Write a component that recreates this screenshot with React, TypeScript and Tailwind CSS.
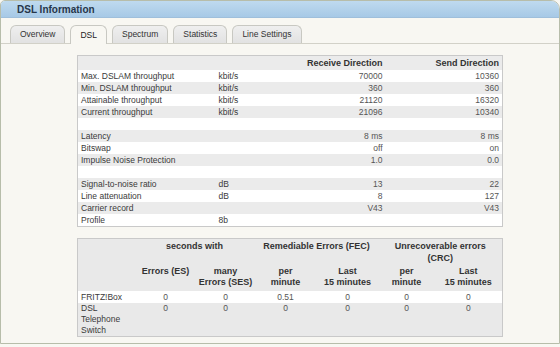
import React from "react";

const rows1: [string, string, string, string][] = [
  ["Max. DSLAM throughput", "kbit/s", "70000", "10360"],
  ["Min. DSLAM throughput", "kbit/s", "360", "360"],
  ["Attainable throughput", "kbit/s", "21120", "16320"],
  ["Current throughput", "kbit/s", "21096", "10340"],
  ["", "", "", ""],
  ["Latency", "", "8 ms", "8 ms"],
  ["Bitswap", "", "off", "on"],
  ["Impulse Noise Protection", "", "1.0", "0.0"],
  ["", "", "", ""],
  ["Signal-to-noise ratio", "dB", "13", "22"],
  ["Line attenuation", "dB", "8", "127"],
  ["Carrier record", "", "V43", "V43"],
  ["Profile", "8b", "", ""],
];

const tabs = ["Overview", "DSL", "Spectrum", "Statistics", "Line Settings"];

export default function App() {
  return (
    <div className="w-[560px] h-[347px] overflow-hidden bg-[#f8f7f2] font-['Liberation_Sans',Arial,sans-serif] text-[#3a3a3a]">
      <div className="h-[344px] border border-[#b7bdaa] rounded-tl-[5px] rounded-tr-[9px] overflow-hidden flex flex-col bg-[#f8f7f2]">
        <div className="h-[17px] shrink-0 bg-gradient-to-b from-[#bfdaef] to-[#a7c9e6] border-b border-[#9fbfdb] pl-[16px] text-[10px] font-bold leading-[17px] text-[#27364a]">
          DSL Information
        </div>
        <div className="mt-[7px] h-[19px] shrink-0 flex items-end gap-[5px] pl-[9px] border-b border-[#d2d1c8]">
          {tabs.map((t) =>
            t === "DSL" ? (
              <div
                key={t}
                className="h-[19px] mb-[-1px] px-[9px] rounded-t-[6px] border border-b-0 border-[#c8c8c2] bg-[#f8f7f2] text-[8.5px] leading-[18px] text-[#222]"
              >
                {t}
              </div>
            ) : (
              <div
                key={t}
                className="h-[18px] px-[9px] rounded-t-[6px] border border-b-0 border-[#c8c8c2] bg-gradient-to-b from-[#efefef] to-[#e2e2e2] text-[8.5px] leading-[17px] text-[#333]"
              >
                {t}
              </div>
            )
          )}
        </div>
        <div className="pl-[76px] pt-[11px] flex flex-col gap-[11px]">
          <table className="w-[425px] table-fixed border-collapse border border-[#c9c9c9] bg-white">
            <colgroup>
              <col className="w-[141px]" />
              <col className="w-[83px]" />
              <col className="w-[84px]" />
              <col className="w-[117px]" />
            </colgroup>
            <thead>
              <tr className="h-[14px] bg-[#ebebeb] text-[9px] font-bold text-[#333]">
                <th></th>
                <th></th>
                <th className="text-right pr-[3px] font-bold leading-[14px]">Receive Direction</th>
                <th className="text-right pr-[3px] font-bold leading-[14px]">Send Direction</th>
              </tr>
            </thead>
            <tbody>
              {rows1.map((r, i) => (
                <tr
                  key={i}
                  className={`h-[12px] text-[8.5px] leading-[12px] ${i % 2 === 1 ? "bg-[#ebebeb]" : "bg-white"}`}
                >
                  <td className="pl-[3px] p-0 whitespace-nowrap">{r[0]}</td>
                  <td className="p-0 whitespace-nowrap">{r[1]}</td>
                  <td className="p-0 pr-[3px] text-right text-[#555]">{r[2]}</td>
                  <td className="p-0 pr-[3px] text-right text-[#555]">{r[3]}</td>
                </tr>
              ))}
            </tbody>
          </table>

          <table className="w-[425px] table-fixed border-collapse border border-[#c9c9c9] bg-[#e9e9e9]">
            <colgroup>
              <col className="w-[57px]" />
              <col className="w-[62px]" />
              <col className="w-[58px]" />
              <col className="w-[62px]" />
              <col className="w-[62px]" />
              <col className="w-[56px]" />
              <col className="w-[68px]" />
            </colgroup>
            <thead>
              <tr className="h-[26px] text-[9px] leading-[11.5px] text-[#333] align-top">
                <th className="pt-[2px]"></th>
                <th colSpan={2} className="pt-[2px] text-center font-bold">seconds with</th>
                <th colSpan={2} className="pt-[2px] text-center font-bold">Remediable Errors (FEC)</th>
                <th colSpan={2} className="pt-[2px] text-center font-bold">
                  Unrecoverable errors
                  <br />
                  (CRC)
                </th>
              </tr>
              <tr className="h-[26px] text-[9px] leading-[11.5px] text-[#333] align-top">
                <th className="pt-[1px]"></th>
                <th className="pt-[1px] text-center font-bold">Errors (ES)</th>
                <th className="pt-[1px] text-center font-bold">
                  many
                  <br />
                  Errors (SES)
                </th>
                <th className="pt-[1px] text-center font-bold">
                  per
                  <br />
                  minute
                </th>
                <th className="pt-[1px] text-center font-bold">
                  Last
                  <br />
                  15 minutes
                </th>
                <th className="pt-[1px] text-center font-bold">
                  per
                  <br />
                  minute
                </th>
                <th className="pt-[1px] text-center font-bold">
                  Last
                  <br />
                  15 minutes
                </th>
              </tr>
            </thead>
            <tbody className="text-[8.5px]">
              <tr className="h-[12px] leading-[12px] bg-white">
                <td className="pl-[3px]">FRITZ!Box</td>
                <td className="text-center text-[#555]">0</td>
                <td className="text-center text-[#555]">0</td>
                <td className="text-center text-[#555]">0.51</td>
                <td className="text-center text-[#555]">0</td>
                <td className="text-center text-[#555]">0</td>
                <td className="text-center text-[#555]">0</td>
              </tr>
              <tr className="h-[33px] leading-[11px] align-top">
                <td className="pl-[3px]">
                  DSL
                  <br />
                  Telephone
                  <br />
                  Switch
                </td>
                <td className="text-center text-[#555]">0</td>
                <td className="text-center text-[#555]">0</td>
                <td className="text-center text-[#555]">0</td>
                <td className="text-center text-[#555]">0</td>
                <td className="text-center text-[#555]">0</td>
                <td className="text-center text-[#555]">0</td>
              </tr>
            </tbody>
          </table>
        </div>
      </div>
    </div>
  );
}
